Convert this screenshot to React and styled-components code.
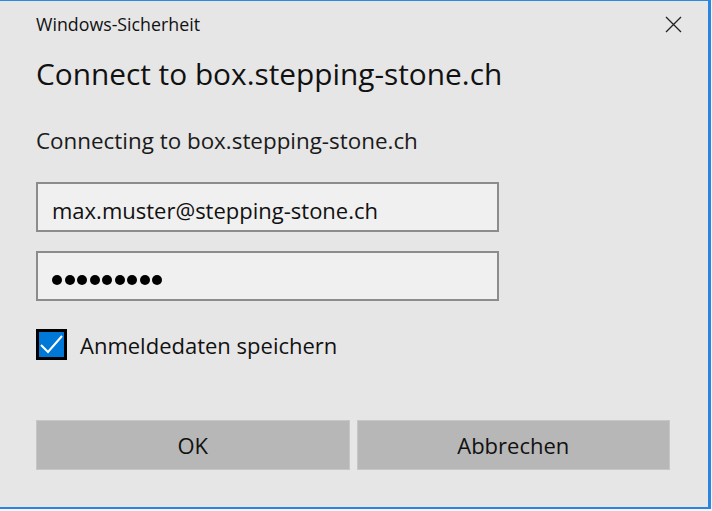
import React from "react";
import styled, { createGlobalStyle } from "styled-components";

const GlobalStyle = createGlobalStyle`
  html, body {
    margin: 0;
    padding: 0;
    background: #f4f4f4;
  }
  body {
    font-family: "Open Sans", "Noto Sans", sans-serif;
    color: #000;
  }
`;

const Window = styled.div`
  box-sizing: border-box;
  width: 711px;
  height: 509px;
  background: #e6e6e6;
  border-top: 1px solid #2b8be3;
  border-right: 3px solid #2686e2;
  border-bottom: 2px solid #2686e2;
  display: flex;
  flex-direction: column;
`;

const TitleBar = styled.div`
  display: flex;
  align-items: center;
  justify-content: space-between;
  height: 46px;
  padding: 0 25px 0 36px;
`;

const Caption = styled.span`
  font-size: 17.8px;
  color: #111;
`;

const CloseButton = styled.button`
  width: 20px;
  height: 20px;
  padding: 0;
  border: none;
  background: transparent;
  display: flex;
  align-items: center;
  justify-content: center;
  cursor: pointer;
`;

const Body = styled.div`
  display: flex;
  flex-direction: column;
  padding: 0 38px 0 36px;
`;

const Heading = styled.h1`
  margin: 9px 0 0;
  font-size: 29.8px;
  font-weight: 400;
  line-height: 36px;
  color: #111;
`;

const Subtitle = styled.p`
  margin: 35px 0 0;
  font-size: 22.4px;
  line-height: 28px;
  color: #1a1a1a;
`;

const Field = styled.div`
  box-sizing: border-box;
  width: 463px;
  height: 50px;
  margin-top: ${(p) => p.$top}px;
  padding: 5px 0 0 14px;
  display: flex;
  align-items: center;
  background: #f0f0f0;
  border: 2px solid #8c8c8c;
  font-size: 22px;
  color: #111;
`;

const Dots = styled.div`
  display: flex;
  gap: 2.5px;
  margin-top: 3px;
`;

const Dot = styled.span`
  width: 10px;
  height: 10px;
  border-radius: 50%;
  background: #000;
`;

const CheckRow = styled.label`
  display: flex;
  align-items: center;
  gap: 13px;
  margin-top: 28px;
  font-size: 22px;
  color: #111;
`;

const CheckBox = styled.span`
  box-sizing: border-box;
  width: 31px;
  height: 31px;
  border: 3px solid #000;
  background: #0078d7;
  display: flex;
  align-items: center;
  justify-content: center;
`;

const Actions = styled.div`
  display: grid;
  grid-template-columns: 1fr 1fr;
  gap: 7px;
  margin-top: 60px;
`;

const ActionButton = styled.button`
  box-sizing: border-box;
  height: 50px;
  border: 1px solid #c6c6c6;
  background: #b7b7b7;
  font-family: inherit;
  font-size: 22px;
  color: #111;
  cursor: pointer;
`;

export default function App() {
  return (
    <>
      <GlobalStyle />
      <Window>
        <TitleBar>
          <Caption>Windows-Sicherheit</Caption>
          <CloseButton aria-label="Schliessen">
            <svg width="17" height="17" viewBox="0 0 17 17">
              <path d="M1 1 L16 16 M16 1 L1 16" stroke="#222" strokeWidth="1.3" fill="none" />
            </svg>
          </CloseButton>
        </TitleBar>
        <Body>
          <Heading>Connect to box.stepping-stone.ch</Heading>
          <Subtitle>Connecting to box.stepping-stone.ch</Subtitle>
          <Field $top={27}>max.muster@stepping-stone.ch</Field>
          <Field $top={19}>
            <Dots>
              {Array.from({ length: 9 }).map((_, i) => (
                <Dot key={i} />
              ))}
            </Dots>
          </Field>
          <CheckRow>
            <CheckBox>
              <svg width="25" height="25" viewBox="0 0 25 25">
                <path d="M2 13 L9 20 L23 4" stroke="#fff" strokeWidth="2" fill="none" />
              </svg>
            </CheckBox>
            Anmeldedaten speichern
          </CheckRow>
          <Actions>
            <ActionButton>OK</ActionButton>
            <ActionButton>Abbrechen</ActionButton>
          </Actions>
        </Body>
      </Window>
    </>
  );
}
